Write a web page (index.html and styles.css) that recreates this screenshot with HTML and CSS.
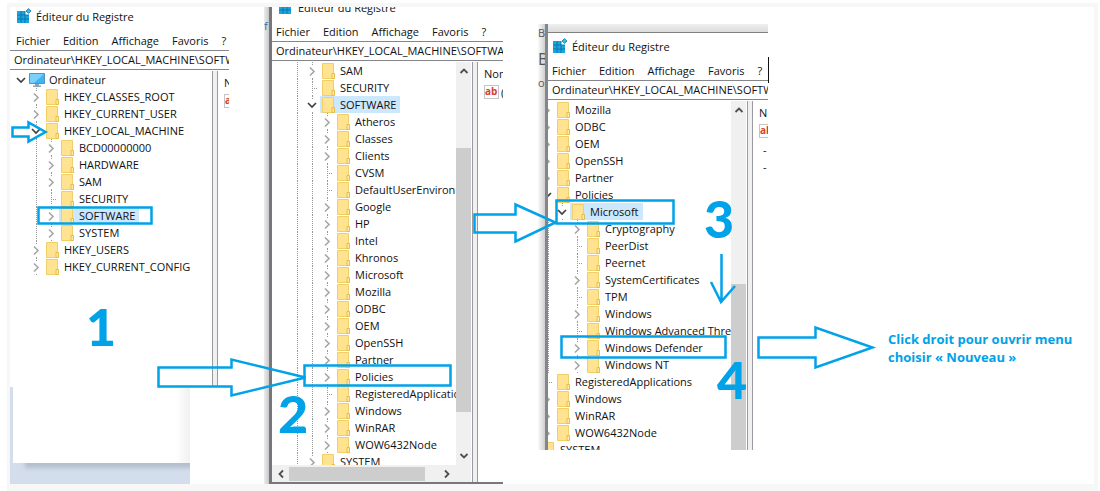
FILE: index.html
```html
<!DOCTYPE html>
<html lang="fr">
<head>
<meta charset="utf-8">
<title>Éditeur du Registre</title>
<link rel="stylesheet" href="styles.css">
</head>
<body>
<svg class="defs" aria-hidden="true">
  <symbol id="folder" viewBox="0 0 16 16"><path d="M2.500 .5h11v15h-11z" fill="#ffe391" stroke="#f0cf66"/><path d="M12 10.500h2.500v5H12z" fill="#ffe9a6" stroke="#e6bd45"/></symbol>
  <symbol id="closed" viewBox="0 0 12 12"><path d="M4 2.500l4 4-4 4" fill="none" stroke="#a6a6a6" stroke-width="1.600"/></symbol>
  <symbol id="open" viewBox="0 0 12 12"><path d="M2 4l4 4 4-4" fill="none" stroke="#404040" stroke-width="1.700"/></symbol>
  <symbol id="leaf" viewBox="0 0 12 12"><path d="M6 0h1v1H6zM6 2h1v1H6zM6 4h1v1H6zM6 6h1v1H6zM8 6h1v1H8zM10 6h1v1h-1zM6 8h1v1H6zM6 10h1v1H6z" fill="#999"/></symbol>
  <symbol id="pc" viewBox="0 0 16 16"><path d="M.5 1.500h15v10H.5z" fill="#3fb4f2" stroke="#4f94bd"/><path d="M1 2h14L5 11H1z" fill="#79d0fa"/><path d="M6 12h4v1.500h2V15H4v-1.500h2z" fill="#8aa5b5"/></symbol>
  <symbol id="regedit" viewBox="0 0 16 16"><path d="M1 3h12v12H1z" fill="#19a5dd"/><path d="M1 7h12M1 11h12M5 3v12M9 3v12" stroke="#0b6fa5" stroke-width=".8"/><path d="M9.500 3H13v3.500H9.500z" fill="#fff"/><path d="M12.500 .5L15 3l-2.500 2.500L10 3z" fill="#35b9e8" stroke="#0b6d9f" stroke-width=".7"/></symbol>
  <symbol id="up" viewBox="0 0 12 12"><path d="M2.500 8L6 4.500 9.500 8" fill="none" stroke="#505050" stroke-width="1.800"/></symbol>
</svg>

<main class="canvas">
  <div class="backdrop"><div class="sheet"></div></div>

  <section class="window first">
    <header class="title"><svg><use href="#regedit"/></svg>Éditeur du Registre</header>
    <nav class="menu"><button>Fichier</button><button>Edition</button><button>Affichage</button><button>Favoris</button><button>?</button></nav>
    <div class="address">Ordinateur\HKEY_LOCAL_MACHINE\SOFTW</div>
    <div class="body">
      <ul class="tree">
        <li class="d0"><svg class="arrow"><use href="#open"/></svg><span><svg><use href="#pc"/></svg>Ordinateur</span></li>
        <li class="d1"><svg class="arrow"><use href="#closed"/></svg><span><svg><use href="#folder"/></svg>HKEY_CLASSES_ROOT</span></li>
        <li class="d1"><svg class="arrow"><use href="#closed"/></svg><span><svg><use href="#folder"/></svg>HKEY_CURRENT_USER</span></li>
        <li class="d1"><svg class="arrow"><use href="#open"/></svg><span><svg><use href="#folder"/></svg>HKEY_LOCAL_MACHINE</span></li>
        <li class="d2"><svg class="arrow"><use href="#closed"/></svg><span><svg><use href="#folder"/></svg>BCD00000000</span></li>
        <li class="d2"><svg class="arrow"><use href="#closed"/></svg><span><svg><use href="#folder"/></svg>HARDWARE</span></li>
        <li class="d2"><svg class="arrow"><use href="#closed"/></svg><span><svg><use href="#folder"/></svg>SAM</span></li>
        <li class="d2"><svg class="arrow"><use href="#leaf"/></svg><span><svg><use href="#folder"/></svg>SECURITY</span></li>
        <li class="d2"><svg class="arrow"><use href="#closed"/></svg><span class="selected"><svg><use href="#folder"/></svg>SOFTWARE</span></li>
        <li class="d2"><svg class="arrow"><use href="#closed"/></svg><span><svg><use href="#folder"/></svg>SYSTEM</span></li>
        <li class="d1"><svg class="arrow"><use href="#closed"/></svg><span><svg><use href="#folder"/></svg>HKEY_USERS</span></li>
        <li class="d1"><svg class="arrow"><use href="#closed"/></svg><span><svg><use href="#folder"/></svg>HKEY_CURRENT_CONFIG</span></li>
      </ul>
      <div class="splitter"></div>
      <div class="values"><div>N</div><div class="value"><b>ab</b></div></div>
    </div>
  </section>

  <div class="behind second-behind"><p>f</p></div>
  <section class="window second">
    <header class="title"><svg><use href="#regedit"/></svg>Éditeur du Registre</header>
    <nav class="menu"><button>Fichier</button><button>Edition</button><button>Affichage</button><button>Favoris</button><button>?</button></nav>
    <div class="address">Ordinateur\HKEY_LOCAL_MACHINE\SOFTWA</div>
    <div class="body">
      <div class="scroller">
        <div class="view">
          <ul class="tree">
            <li class="d2"><svg class="arrow"><use href="#closed"/></svg><span><svg><use href="#folder"/></svg>SAM</span></li>
            <li class="d2"><svg class="arrow"><use href="#leaf"/></svg><span><svg><use href="#folder"/></svg>SECURITY</span></li>
            <li class="d2"><svg class="arrow"><use href="#open"/></svg><span class="selected"><svg><use href="#folder"/></svg>SOFTWARE</span></li>
            <li class="d3"><svg class="arrow"><use href="#closed"/></svg><span><svg><use href="#folder"/></svg>Atheros</span></li>
            <li class="d3"><svg class="arrow"><use href="#closed"/></svg><span><svg><use href="#folder"/></svg>Classes</span></li>
            <li class="d3"><svg class="arrow"><use href="#closed"/></svg><span><svg><use href="#folder"/></svg>Clients</span></li>
            <li class="d3"><svg class="arrow"><use href="#leaf"/></svg><span><svg><use href="#folder"/></svg>CVSM</span></li>
            <li class="d3"><svg class="arrow"><use href="#leaf"/></svg><span><svg><use href="#folder"/></svg>DefaultUserEnvironm</span></li>
            <li class="d3"><svg class="arrow"><use href="#closed"/></svg><span><svg><use href="#folder"/></svg>Google</span></li>
            <li class="d3"><svg class="arrow"><use href="#closed"/></svg><span><svg><use href="#folder"/></svg>HP</span></li>
            <li class="d3"><svg class="arrow"><use href="#closed"/></svg><span><svg><use href="#folder"/></svg>Intel</span></li>
            <li class="d3"><svg class="arrow"><use href="#closed"/></svg><span><svg><use href="#folder"/></svg>Khronos</span></li>
            <li class="d3"><svg class="arrow"><use href="#closed"/></svg><span><svg><use href="#folder"/></svg>Microsoft</span></li>
            <li class="d3"><svg class="arrow"><use href="#closed"/></svg><span><svg><use href="#folder"/></svg>Mozilla</span></li>
            <li class="d3"><svg class="arrow"><use href="#closed"/></svg><span><svg><use href="#folder"/></svg>ODBC</span></li>
            <li class="d3"><svg class="arrow"><use href="#closed"/></svg><span><svg><use href="#folder"/></svg>OEM</span></li>
            <li class="d3"><svg class="arrow"><use href="#closed"/></svg><span><svg><use href="#folder"/></svg>OpenSSH</span></li>
            <li class="d3"><svg class="arrow"><use href="#closed"/></svg><span><svg><use href="#folder"/></svg>Partner</span></li>
            <li class="d3"><svg class="arrow"><use href="#closed"/></svg><span><svg><use href="#folder"/></svg>Policies</span></li>
            <li class="d3"><svg class="arrow"><use href="#leaf"/></svg><span><svg><use href="#folder"/></svg>RegisteredApplicatio</span></li>
            <li class="d3"><svg class="arrow"><use href="#closed"/></svg><span><svg><use href="#folder"/></svg>Windows</span></li>
            <li class="d3"><svg class="arrow"><use href="#closed"/></svg><span><svg><use href="#folder"/></svg>WinRAR</span></li>
            <li class="d3"><svg class="arrow"><use href="#closed"/></svg><span><svg><use href="#folder"/></svg>WOW6432Node</span></li>
            <li class="d2"><svg class="arrow"><use href="#closed"/></svg><span><svg><use href="#folder"/></svg>SYSTEM</span></li>
          </ul>
          <div class="vbar"><svg><use href="#up"/></svg><i></i><svg class="down"><use href="#up"/></svg></div>
        </div>
        <div class="hbar"><svg class="left"><use href="#up"/></svg><i></i><svg class="right"><use href="#up"/></svg></div>
      </div>
      <div class="splitter"></div>
      <div class="values"><div>Nom</div><div class="value"><b>ab</b>(</div></div>
    </div>
  </section>

  <div class="behind third-behind"><p>Bl</p><p class="big">B</p><p>or</p></div>
  <section class="window third">
    <header class="title"><svg><use href="#regedit"/></svg>Éditeur du Registre</header>
    <nav class="menu"><button>Fichier</button><button>Edition</button><button>Affichage</button><button>Favoris</button><button>?</button></nav>
    <div class="address">Ordinateur\HKEY_LOCAL_MACHINE\SOFTW</div>
    <div class="body">
      <ul class="tree">
        <li class="d1"><svg class="arrow"><use href="#closed"/></svg><span><svg><use href="#folder"/></svg>Mozilla</span></li>
        <li class="d1"><svg class="arrow"><use href="#closed"/></svg><span><svg><use href="#folder"/></svg>ODBC</span></li>
        <li class="d1"><svg class="arrow"><use href="#closed"/></svg><span><svg><use href="#folder"/></svg>OEM</span></li>
        <li class="d1"><svg class="arrow"><use href="#closed"/></svg><span><svg><use href="#folder"/></svg>OpenSSH</span></li>
        <li class="d1"><svg class="arrow"><use href="#closed"/></svg><span><svg><use href="#folder"/></svg>Partner</span></li>
        <li class="d1"><svg class="arrow"><use href="#open"/></svg><span><svg><use href="#folder"/></svg>Policies</span></li>
        <li class="d2"><svg class="arrow"><use href="#open"/></svg><span class="selected"><svg><use href="#folder"/></svg>Microsoft</span></li>
        <li class="d3 end"><svg class="arrow"><use href="#closed"/></svg><span><svg><use href="#folder"/></svg>Cryptography</span></li>
        <li class="d3 end"><svg class="arrow"><use href="#leaf"/></svg><span><svg><use href="#folder"/></svg>PeerDist</span></li>
        <li class="d3 end"><svg class="arrow"><use href="#leaf"/></svg><span><svg><use href="#folder"/></svg>Peernet</span></li>
        <li class="d3 end"><svg class="arrow"><use href="#closed"/></svg><span><svg><use href="#folder"/></svg>SystemCertificates</span></li>
        <li class="d3 end"><svg class="arrow"><use href="#leaf"/></svg><span><svg><use href="#folder"/></svg>TPM</span></li>
        <li class="d3 end"><svg class="arrow"><use href="#closed"/></svg><span><svg><use href="#folder"/></svg>Windows</span></li>
        <li class="d3 end"><svg class="arrow"><use href="#leaf"/></svg><span><svg><use href="#folder"/></svg>Windows Advanced Threa</span></li>
        <li class="d3 end"><svg class="arrow"><use href="#closed"/></svg><span><svg><use href="#folder"/></svg>Windows Defender</span></li>
        <li class="d3 end"><svg class="arrow"><use href="#closed"/></svg><span><svg><use href="#folder"/></svg>Windows NT</span></li>
        <li class="d1"><svg class="arrow"><use href="#leaf"/></svg><span><svg><use href="#folder"/></svg>RegisteredApplications</span></li>
        <li class="d1"><svg class="arrow"><use href="#closed"/></svg><span><svg><use href="#folder"/></svg>Windows</span></li>
        <li class="d1"><svg class="arrow"><use href="#closed"/></svg><span><svg><use href="#folder"/></svg>WinRAR</span></li>
        <li class="d1"><svg class="arrow"><use href="#closed"/></svg><span><svg><use href="#folder"/></svg>WOW6432Node</span></li>
        <li class="d0"><svg class="arrow"><use href="#closed"/></svg><span><svg><use href="#folder"/></svg>SYSTEM</span></li>
      </ul>
      <div class="vbar"><svg><use href="#up"/></svg><i></i></div>
      <div class="splitter"></div>
      <div class="values"><div>N</div><div class="value"><b>ab</b></div><p>-</p><p>-</p></div>
    </div>
  </section>
  <div class="edge"></div>

  <svg class="marks" viewBox="10 7 1084 477" aria-hidden="true">
    <path d="M38.500 207.500h113v16h-113zM304.500 365.500h146v20h-146zM556.500 200.500h117v23h-117zM561.500 336.500h164v21h-164z"/>
    <path d="M12.500 127.500h16v-5l17 9.500-17 9.500v-5h-16z"/>
    <path d="M158.500 367.500h73v-8l74 18-74 18v-9h-73z"/>
    <path d="M474.500 214.500h41v-10l40 18-40 19v-9h-41z"/>
    <path d="M758.500 337.500h57v-10l57 20-57 20v-10h-57z"/>
    <path d="M721.500 254v48M711 282l10 20 14-16"/>
  </svg>
  <strong class="number one">1</strong>
  <strong class="number two">2</strong>
  <strong class="number three">3</strong>
  <strong class="number four">4</strong>
  <p class="note">Click droit pour ouvrir menu<br>choisir « Nouveau »</p>
</main>
</body>
</html>
```
FILE: styles.css
```css
* { box-sizing: border-box; }
body {
  margin: 0;
  padding: 3px 2px 0 7px;
  background: #fff;
  color: #111;
  font: 11px/17px "Open Sans", "Noto Sans", sans-serif;
}
p, ul { margin: 0; padding: 0; }
.defs { position: absolute; width: 0; height: 0; }
.canvas {
  position: relative;
  min-height: calc(100vh - 3px);
  overflow: hidden;
  border: solid #f7f7f7;
  border-width: 4px 4px 7px 3px;
}

/* Windows placed on the canvas */
.window {
  position: absolute;
  display: flex;
  flex-direction: column;
  overflow: hidden;
  background: #fff;
  white-space: nowrap;
}
.first { left: 0; top: 0; width: 219px; height: 379px; }
.second { left: 259px; top: 0; width: 234px; height: 477px; border: solid #77777d; border-width: 0 0 2px 3px; }
.third { left: 535px; top: 17px; width: 223px; height: 426px; border-left: 3px solid #85858c; }
.third::before { content: ""; flex: none; height: 8px; background: linear-gradient(#efefef, #dcdcdc); border-bottom: 1px solid #808080; }

.title { flex: none; display: flex; align-items: center; gap: 4px; height: 28px; padding-left: 6px; }
.title svg { width: 16px; height: 16px; }
.first .title { margin-top: -5px; }
.second .title { margin-top: -14px; }
.third .title { margin-top: -1px; padding-left: 4px; }
.menu { flex: none; display: flex; align-items: center; gap: 13px; height: 20px; padding-left: 4px; }
.menu button { border: 0; padding: 0; background: none; color: inherit; font: inherit; }
.first .menu { padding-left: 6px; }
.address {
  flex: none;
  height: 20px;
  padding-left: 4px;
  border: solid #85858c;
  border-width: 1px 0;
  overflow: hidden;
}
.body { flex: 1; display: flex; min-height: 0; padding-top: 1px; }
.scroller { flex: 1; display: flex; flex-direction: column; min-width: 0; }
.view { flex: 1; display: flex; min-height: 0; }

/* Registry tree */
.tree { --base: 5px; flex: 1; min-width: 0; overflow: hidden; list-style: none; }
.second .tree { --base: 4px; }
.third .tree { --base: -22px; }
.tree li {
  --line: linear-gradient(#999 50%, transparent 50%);
  display: flex;
  align-items: center;
  gap: 2px;
  height: 17px;
  background-repeat: repeat-y;
  background-size: 1px 2px;
}
.tree li::before { content: ""; flex: none; margin-left: -2px; }
.tree .arrow { flex: none; width: 12px; height: 12px; background: #fff; }
.tree span { display: flex; align-items: center; gap: 4px; height: 17px; padding-right: 4px; }
.tree span svg { flex: none; width: 16px; height: 16px; }
.tree .selected { background: #cce8ff; }
.tree .d0 .arrow { margin-left: var(--base); }
.tree .d1 .arrow { margin-left: calc(var(--base) + 15px); }
.tree .d2 .arrow { margin-left: calc(var(--base) + 30px); }
.tree .d3 .arrow { margin-left: calc(var(--base) + 45px); }
.tree .d1 { background-image: var(--line); background-position: calc(var(--base) + 21px) 0; }
.tree .d2 {
  background-image: var(--line), var(--line);
  background-position: calc(var(--base) + 21px) 0, calc(var(--base) + 36px) 0;
}
.tree .d3 {
  background-image: var(--line), var(--line), var(--line);
  background-position: calc(var(--base) + 21px) 0, calc(var(--base) + 36px) 0, calc(var(--base) + 51px) 0;
}
.tree .end {
  background-image: var(--line), var(--line);
  background-position: calc(var(--base) + 22px) 0, calc(var(--base) + 51px) 0;
}

/* Scroll bars and value pane */
.vbar, .hbar { flex: none; display: flex; align-items: center; background: #f0f0f0; }
.vbar { flex-direction: column; width: 15px; padding: 3px 0; }
.hbar { height: 17px; padding: 0 18px 0 3px; }
.vbar svg, .hbar svg { flex: none; width: 12px; height: 12px; }
.vbar i, .hbar i { flex: 1; background: #cdcdcd; }
.vbar i { width: 15px; margin: 71px 0 38px; }
.hbar i { height: 14px; margin: 0 16px 0 2px; }
.third .vbar { padding-bottom: 0; }
.third .vbar i { margin: 168px 0 0; }
.vbar .down { transform: rotate(180deg); }
.hbar .left { transform: rotate(-90deg); }
.hbar .right { transform: rotate(90deg); }
.splitter { flex: none; width: 6px; background: #f0f0f0; border: solid #9a9aa2; border-width: 0 1px; }
.scroller + .splitter, .vbar + .splitter { margin-left: 1px; }
.values { flex: none; width: 25px; padding: 3px 0 0 6px; overflow: hidden; }
.first .values { width: 11px; }
.third .values { width: 15px; }
.value { display: flex; align-items: center; gap: 2px; height: 20px; }
.value b {
  flex: none;
  width: 15px;
  height: 14px;
  border: 1px solid #c4c4c4;
  color: #d8412f;
  font-size: 10px;
  line-height: 10px;
}
.values p { padding-left: 4px; }

/* Slivers of what lies below the windows */
.backdrop { position: absolute; left: 0; top: 380px; width: 180px; height: 97px; padding-left: 3px; overflow: hidden; background: #d4ddeb; }
.sheet { height: 76px; background: linear-gradient(90deg, #fff 92%, #f0f0f0); box-shadow: 12px 5px 4px #b3bfce; }
.behind { position: absolute; overflow: hidden; color: #555; }
.second-behind { left: 254px; top: 0; width: 5px; height: 477px; padding-top: 10px; background: linear-gradient(90deg, #ececec, #c9c9c9); }
.second-behind p { color: #2a6fb0; }
.third-behind { left: 528px; top: 17px; width: 7px; height: 426px; background: linear-gradient(90deg, #fafafa, #cfcfcf); }
.third-behind .big { padding: 10px 0 6px; font-size: 16px; }
.edge { position: absolute; left: 758px; top: 50px; width: 1px; height: 26px; background: #111; }

/* Annotations */
.marks { position: absolute; left: 0; top: 0; width: 1084px; height: 477px; fill: none; stroke: #00a2e8; stroke-width: 2.500; }
.number { position: absolute; color: #00a2e8; font: 900 52px/52px Lato, "Open Sans", sans-serif; }
.one { left: 76px; top: 293px; }
.two { left: 268px; top: 380px; }
.three { left: 694px; top: 185px; }
.four { left: 707px; top: 346px; }
.note { position: absolute; left: 878px; top: 323px; color: #00a2e8; font-size: 13px; font-weight: bold; line-height: 18px; }
```
